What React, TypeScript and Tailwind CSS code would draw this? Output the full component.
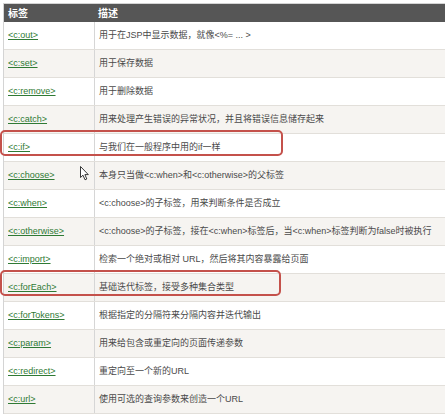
const rows: [string, string][] = [
  ["<c:out>", "用于在JSP中显示数据，就像<%= ... >"],
  ["<c:set>", "用于保存数据"],
  ["<c:remove>", "用于删除数据"],
  ["<c:catch>", "用来处理产生错误的异常状况，并且将错误信息储存起来"],
  ["<c:if>", "与我们在一般程序中用的if一样"],
  ["<c:choose>", "本身只当做<c:when>和<c:otherwise>的父标签"],
  ["<c:when>", "<c:choose>的子标签，用来判断条件是否成立"],
  ["<c:otherwise>", "<c:choose>的子标签，接在<c:when>标签后，当<c:when>标签判断为false时被执行"],
  ["<c:import>", "检索一个绝对或相对 URL，然后将其内容暴露给页面"],
  ["<c:forEach>", "基础迭代标签，接受多种集合类型"],
  ["<c:forTokens>", "根据指定的分隔符来分隔内容并迭代输出"],
  ["<c:param>", "用来给包含或重定向的页面传递参数"],
  ["<c:redirect>", "重定向至一个新的URL"],
  ["<c:url>", "使用可选的查询参数来创造一个URL"],
];

function Cursor() {
  return (
    <svg
      className="absolute left-[80px] top-[166px]"
      width="10"
      height="15"
      viewBox="0 0 10 15"
    >
      <path
        d="M0.5 0.5 L0.5 11.5 L3 9.2 L5 13.8 L6.8 13 L4.9 8.6 L8.3 8.6 Z"
        fill="#fff"
        stroke="#222"
        strokeWidth="0.9"
        strokeLinejoin="round"
      />
    </svg>
  );
}

export default function App() {
  return (
    <div className="relative h-[417px] w-[445px] overflow-hidden bg-white font-['Liberation_Sans','Noto_Sans_CJK_SC',sans-serif]">
      <div className="ml-[3px] mt-[3px] w-[460px] border-l border-t border-[#d4d4d4]">
        <div className="grid h-[18px] grid-cols-[91px_1fr] items-center bg-[#565656] text-[10px] font-bold text-white">
          <div className="pl-[4px]">标签</div>
          <div className="pl-[3px]">描述</div>
        </div>
        {rows.map(([tag, desc], i) => (
          <div
            key={tag}
            className={`grid h-[28px] grid-cols-[91px_1fr] border-b border-[#e2dfda] text-[9px] ${
              i % 2 === 0 ? "bg-white" : "bg-[#f6f4f1]"
            }`}
          >
            <div className="flex items-center border-r border-[#d6d6d6] pl-[4px]">
              <span className="text-[#2f7a34] underline">{tag}</span>
            </div>
            <div className="flex items-center whitespace-nowrap pl-[4px] text-[#4a4a4a]">
              {desc}
            </div>
          </div>
        ))}
      </div>
      <div className="absolute left-0 top-[130px] h-[26px] w-[283px] rounded-[5px] border-2 border-[#c4514b]" />
      <div className="absolute left-0 top-[270px] h-[26px] w-[281px] rounded-[5px] border-2 border-[#c4514b]" />
      <Cursor />
    </div>
  );
}
